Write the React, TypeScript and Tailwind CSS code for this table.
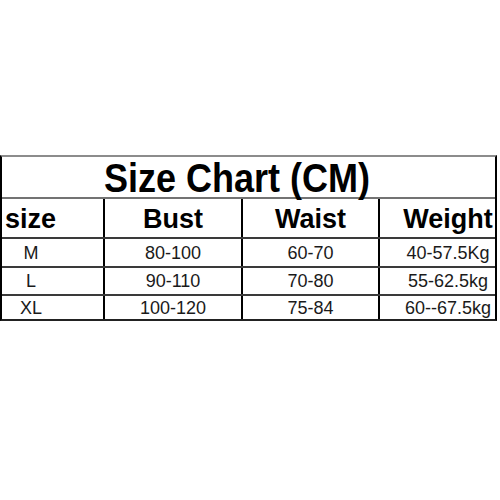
import React from "react";

const rows = [
  ["M", "80-100", "60-70", "40-57.5Kg"],
  ["L", "90-110", "70-80", "55-62.5kg"],
  ["XL", "100-120", "75-84", "60--67.5kg"],
];
const heights = ["h-[29px]", "h-[28px]", "h-[23px]"];

export default function App() {
  return (
    <div
      className="w-[500px] h-[500px] bg-white pt-[155px]"
      style={{ fontFamily: '"Liberation Sans", Arial, sans-serif' }}
    >
      <div className="w-[497px] border-l-2 border-r-2 border-l-black border-r-black border-t-2 border-t-[#8c8c8c] border-b-2 border-b-[#222]">
        <div className="h-[42px] border-b-2 border-b-[#737373] flex items-center pl-[102px]">
          <span className="inline-block text-[40px] font-bold text-black leading-none origin-left scale-x-[0.9] mt-[2px]">
            Size Chart (CM)
          </span>
        </div>
        <div className="grid grid-cols-[103px_138px_137px_1fr] h-[40px] border-b-2 border-b-[#3a3a3a] text-[27px] font-bold text-black leading-none">
          <div className="border-r-2 border-r-black flex items-center pl-[3px] pt-[2px]">size</div>
          <div className="border-r-2 border-r-black flex items-center justify-center pt-[2px]">Bust</div>
          <div className="border-r-2 border-r-black flex items-center justify-center pt-[2px]">Waist</div>
          <div className="flex items-center justify-center pl-[21px] pt-[2px]">Weight</div>
        </div>
        {rows.map((r, i) => (
          <div
            key={i}
            className={`grid grid-cols-[103px_138px_137px_1fr] ${heights[i]} ${i < 2 ? "border-b-2 border-b-[#3a3a3a]" : ""} text-[18px] text-[#1a1a1a] leading-none`}
          >
            <div className="border-r-2 border-r-black flex items-center">
              <span className="w-[58px] text-center">{r[0]}</span>
            </div>
            <div className="border-r-2 border-r-black flex items-center justify-center">{r[1]}</div>
            <div className="border-r-2 border-r-black flex items-center justify-center">{r[2]}</div>
            <div className="flex items-center justify-center pl-[21px]">{r[3]}</div>
          </div>
        ))}
      </div>
    </div>
  );
}
